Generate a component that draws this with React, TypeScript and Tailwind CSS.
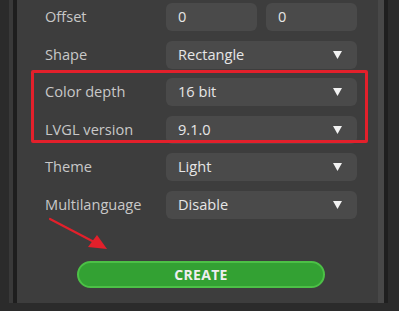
import React from 'react'

type Row = {
    label: string
    kind: 'pair' | 'select'
    value?: string
    values?: string[]
}

const rows: Row[] = [
    { label: 'Offset', kind: 'pair', values: ['0', '0'] },
    { label: 'Shape', kind: 'select', value: 'Rectangle' },
    { label: 'Color depth', kind: 'select', value: '16 bit' },
    { label: 'LVGL version', kind: 'select', value: '9.1.0' },
    { label: 'Theme', kind: 'select', value: 'Light' },
    { label: 'Multilanguage', kind: 'select', value: 'Disable' },
]

const Select = ({ value }: { value: string }) => (
    <div className="flex h-[28px] w-[191px] items-center justify-between rounded-[6px] bg-[#4a4a4a] pl-[12px] pr-[15px] text-[#e6e6e6]">
        <span>{value}</span>
        <svg width="9" height="8" viewBox="0 0 9 8">
            <polygon points="0,0 9,0 4.5,8" fill="#f2f2f2" />
        </svg>
    </div>
)

const App = () => {
    return (
        <div
            className="relative flex h-[311px] w-[399px] overflow-hidden bg-[#2b2b2b] text-[14.6px]"
            style={{ fontFamily: '"Open Sans", "Noto Sans", sans-serif' }}
        >
            {/* left gutter */}
            <div className="ml-[9px] h-[303px] w-[4px] bg-[#393939]" />
            <div className="h-[303px] w-[4px] bg-[#1e1e1e]" />

            {/* panel */}
            <div className="flex h-[303px] w-[361px] flex-col bg-[#3d3d3d] pl-[28px] pt-[3px]">
                <div className="flex flex-col gap-[9.6px]">
                    {rows.map((row) => (
                        <div key={row.label} className="flex h-[28px] items-center">
                            <div className="w-[121px] text-[#c8c8c8]">{row.label}</div>
                            {row.kind === 'pair' ? (
                                <div className="flex gap-[9px]">
                                    {row.values!.map((v, i) => (
                                        <div key={i} className="flex h-[28px] w-[91px] items-center rounded-[6px] bg-[#4a4a4a] pl-[12px] text-[#e6e6e6]">
                                            {v}
                                        </div>
                                    ))}
                                </div>
                            ) : (
                                <Select value={row.value!} />
                            )}
                        </div>
                    ))}
                </div>

                <button className="ml-[32px] mt-[42px] flex h-[27px] w-[248px] items-center justify-center rounded-full border-2 border-[#4cc046] bg-[#33a133] text-[14px] font-bold tracking-[0.3px] text-[#eeeeee]">
                    CREATE
                </button>
            </div>

            {/* scrollbar */}
            <div className="h-[303px] w-[6px] bg-[#484848]" />
            <div className="h-[303px] w-[4px] bg-[#1f1f1f]" />

            {/* annotation: highlight box */}
            <div className="absolute left-[31px] top-[70px] h-[73px] w-[337px] rounded-[2px] border-[3px] border-[#e3202b]" />

            {/* annotation: arrow */}
            <svg className="absolute left-0 top-0" width="399" height="311" viewBox="0 0 399 311">
                <line x1="50" y1="219" x2="96" y2="243" stroke="#e3202b" strokeWidth="2.2" strokeLinecap="round" />
                <polygon points="107,249 88,247 97,235" fill="#e3202b" />
            </svg>
        </div>
    )
}

export default App
